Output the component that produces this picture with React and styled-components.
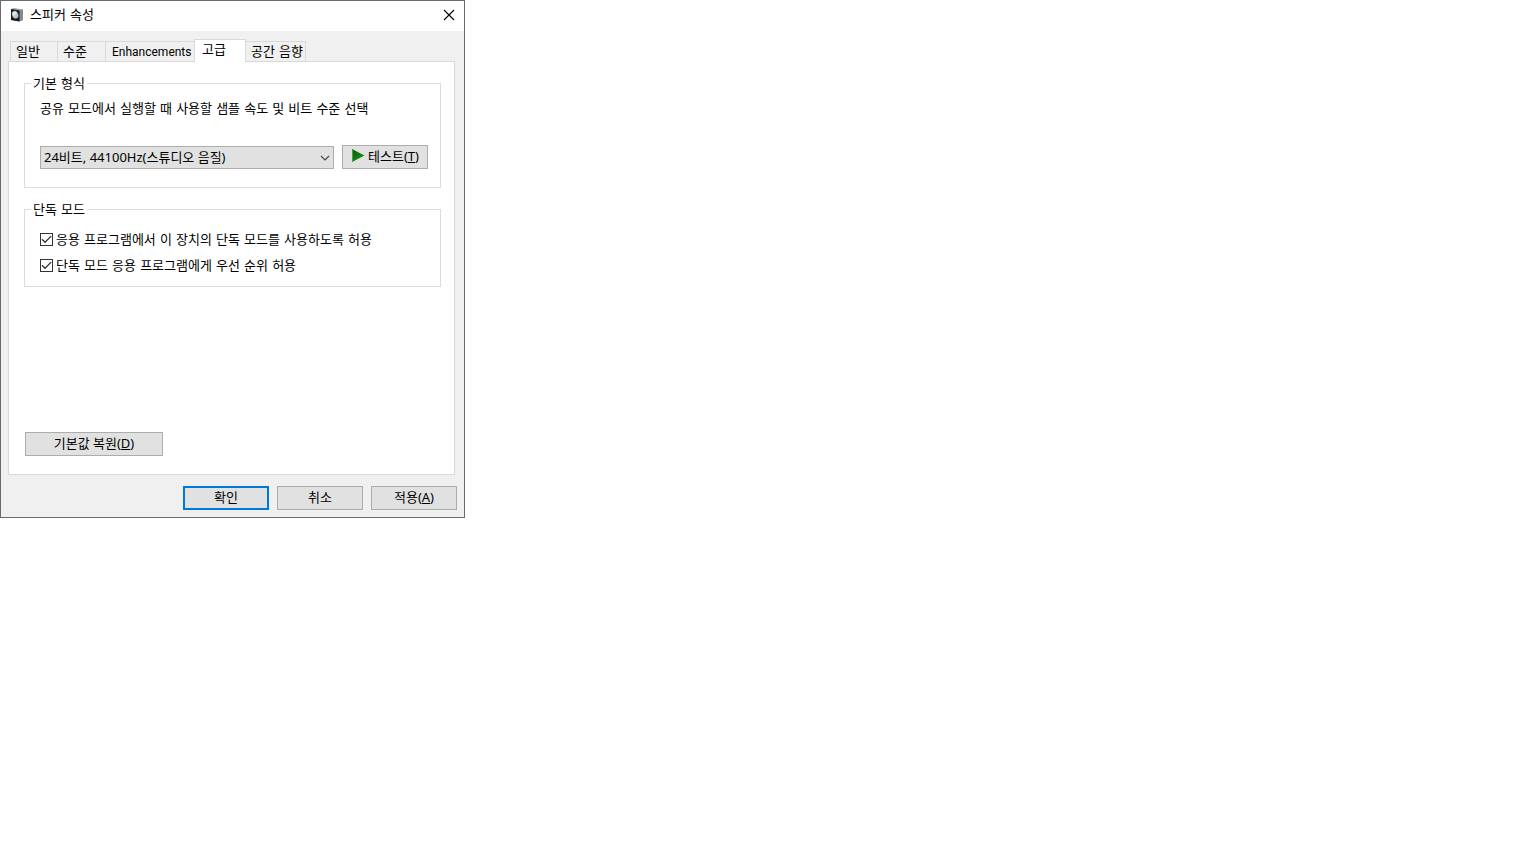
import React, { useState } from 'react';
import styled, { createGlobalStyle, css } from 'styled-components';

const proseFont = '"DejaVu Sans", "Noto Sans CJK KR", sans-serif';
const controlFont = '"Noto Sans", "Noto Sans CJK KR", sans-serif';
const latinFont = 'Roboto, "Noto Sans CJK KR", sans-serif';

const GlobalStyle = createGlobalStyle`
  * { box-sizing: border-box; }
  body { margin: 0; background: #fff; }
  body, button, select, input {
    font-family: ${proseFont};
    font-size: 13px;
    line-height: 18px;
    color: #000;
  }
`;

const Dialog = styled.main`
  display: flex;
  flex-direction: column;
  width: 100%;
  max-width: 465px;
  background: #f0f0f0;
  border: 1px solid #6b6a6e;
`;

const TitleBar = styled.header`
  display: flex;
  align-items: center;
  height: 30px;
  padding: 0 9px 2px;
  background: #fff;
`;

const Title = styled.h1`
  flex: 1;
  margin: 0 0 0 6px;
  font-size: 13px;
  font-weight: 400;
  line-height: 18px;
`;

const CloseButton = styled.button`
  display: flex;
  padding: 0;
  border: 0;
  background: none;
`;

const TabList = styled.div`
  display: flex;
  align-items: flex-end;
  height: 30px;
  padding-left: 9px;
`;

const Tab = styled.button`
  width: ${(p) => p.$width}px;
  height: 20px;
  margin: 0 -1px 0 0;
  padding: 0 0 0 5px;
  border: 1px solid #d9d9d9;
  border-bottom: 0;
  background: #f0f0f0;
  text-align: left;
  white-space: nowrap;
  ${(p) =>
    p.$latin &&
    css`
      padding-left: 6px;
      font-family: ${latinFont};
      font-size: 12px;
    `}
  ${(p) =>
    p.$active &&
    css`
      position: relative;
      height: 23px;
      margin-bottom: -1px;
      padding: 0 0 2px 7px;
      background: #fff;
    `}
`;

const Panel = styled.section`
  display: flex;
  flex-direction: column;
  gap: 11px;
  min-height: 414px;
  margin: 0 9px 0 7px;
  padding: 11px 13px 18px 15px;
  border: 1px solid #d9d9d9;
  background: #fff;
`;

const Group = styled.fieldset`
  min-width: 0;
  margin: 0;
  padding: ${(p) => (p.$compact ? '10px 12px 11px 15px' : '7px 12px 18px 15px')};
  border: 1px solid #dcdcdc;
`;

const Legend = styled.legend`
  margin-left: -9px;
  padding: 2px 2px 0;
`;

const FormatLabel = styled.label`
  display: block;
  margin-bottom: 27px;
`;

const FormatRow = styled.div`
  display: flex;
  align-items: flex-end;
  gap: 8px;
`;

const SelectBox = styled.div`
  position: relative;
  flex: 1;
  display: flex;
`;

const Select = styled.select`
  appearance: none;
  width: 100%;
  height: 23px;
  padding: 0 20px 2px 3px;
  border: 1px solid #adadad;
  border-radius: 0;
  background: #e1e1e1;
  font-family: ${controlFont};
`;

const SelectArrow = styled.svg`
  position: absolute;
  right: 4px;
  top: 9px;
  pointer-events: none;
`;

const Button = styled.button`
  display: flex;
  align-items: center;
  justify-content: center;
  gap: 3px;
  width: ${(p) => (p.$wide ? 138 : 86)}px;
  height: 24px;
  padding: 0 0 2px;
  border: ${(p) => (p.$primary ? '2px solid #0078d7' : '1px solid #adadad')};
  background: #e1e1e1;
  font-family: ${controlFont};
  white-space: nowrap;
`;

const CheckList = styled.div`
  display: flex;
  flex-direction: column;
  gap: 6px;
`;

const CheckLabel = styled.label`
  display: flex;
  align-items: center;
  gap: 3px;
`;

const CheckText = styled.span`
  padding-top: 2px;
`;

const CheckBox = styled.span`
  position: relative;
  display: flex;
  input {
    appearance: none;
    width: 13px;
    height: 13px;
    margin: 0;
    border: 1px solid #333;
    background: #fff;
  }
  svg {
    position: absolute;
    inset: 0;
    pointer-events: none;
    visibility: hidden;
  }
  input:checked + svg { visibility: visible; }
`;

const PanelActions = styled.div`
  margin-top: auto;
  padding-left: 1px;
`;

const Footer = styled.footer`
  display: flex;
  justify-content: flex-end;
  gap: 8px;
  padding: 11px 7px 7px;
`;

const SpeakerIcon = () => (
  <svg width="14" height="14" viewBox="0 0 14 14" aria-hidden="true">
    <path d="M1 1L4 0L13 1.5V12L9 13.5L1 12Z" fill="#a0a3a8" />
    <path d="M9 3L13 1.5V12L9 13.5Z" fill="#85888d" />
    <path d="M1 1L9.5 2.5V13.5L1 12Z" fill="#17191b" />
    <ellipse cx="5.2" cy="6.8" rx="3.2" ry="4" fill="#8fa0a3" transform="rotate(-20 5.2 6.8)" />
    <ellipse cx="5" cy="6.5" rx="2.5" ry="3.3" fill="#dce6e8" transform="rotate(-20 5 6.5)" />
    <path d="M4 8L7 5.5V9L5.5 10Z" fill="#b9c6c8" />
  </svg>
);

const PlayIcon = () => (
  <svg width="14" height="14" viewBox="0 0 14 14" aria-hidden="true">
    <defs>
      <linearGradient id="play" x1="0" y1="0" x2="1" y2="1">
        <stop offset="0" stopColor="#075c07" />
        <stop offset="1" stopColor="#1d981d" />
      </linearGradient>
    </defs>
    <path d="M1 0L13.5 6.5L1 13Z" fill="url(#play)" />
    <path d="M1.5 1V12.5" stroke="#4f9a4f" />
  </svg>
);

function Check({ children }) {
  return (
    <CheckLabel>
      <CheckBox>
        <input type="checkbox" defaultChecked />
        <svg width="13" height="13" viewBox="0 0 13 13" fill="none" stroke="#333" strokeWidth="1.3">
          <path d="M2 6.3L5 9.3L11.2 3.1" />
        </svg>
      </CheckBox>
      <CheckText>{children}</CheckText>
    </CheckLabel>
  );
}

const tabs = [
  { name: '일반', width: 48 },
  { name: '수준', width: 49 },
  { name: 'Enhancements', width: 90, latin: true },
  { name: '고급', width: 52 },
  { name: '공간 음향', width: 61 },
];

export default function App() {
  const [active, setActive] = useState('고급');
  return (
    <>
      <GlobalStyle />
      <Dialog>
        <TitleBar>
          <SpeakerIcon />
          <Title>스피커 속성</Title>
          <CloseButton type="button" aria-label="닫기">
            <svg width="12" height="12" viewBox="0 0 12 12" fill="none" stroke="#000" strokeWidth="1.1">
              <path d="M1 1L11 11M11 1L1 11" />
            </svg>
          </CloseButton>
        </TitleBar>
        <TabList role="tablist">
          {tabs.map((t) => (
            <Tab
              key={t.name}
              type="button"
              role="tab"
              aria-selected={t.name === active}
              $active={t.name === active}
              $width={t.width}
              $latin={t.latin}
              onClick={() => setActive(t.name)}
            >
              {t.name}
            </Tab>
          ))}
        </TabList>
        <Panel role="tabpanel">
          <Group>
            <Legend>기본 형식</Legend>
            <FormatLabel htmlFor="format">
              공유 모드에서 실행할 때 사용할 샘플 속도 및 비트 수준 선택
            </FormatLabel>
            <FormatRow>
              <SelectBox>
                <Select id="format">
                  <option>24비트, 44100Hz(스튜디오 음질)</option>
                </Select>
                <SelectArrow width="10" height="6" viewBox="0 0 10 6" fill="none" stroke="#444" strokeWidth="1.1">
                  <path d="M1 1L5 5L9 1" />
                </SelectArrow>
              </SelectBox>
              <Button type="button">
                <PlayIcon />
                <span>테스트(<u>T</u>)</span>
              </Button>
            </FormatRow>
          </Group>
          <Group $compact>
            <Legend>단독 모드</Legend>
            <CheckList>
              <Check>응용 프로그램에서 이 장치의 단독 모드를 사용하도록 허용</Check>
              <Check>단독 모드 응용 프로그램에게 우선 순위 허용</Check>
            </CheckList>
          </Group>
          <PanelActions>
            <Button type="button" $wide>
              <span>기본값 복원(<u>D</u>)</span>
            </Button>
          </PanelActions>
        </Panel>
        <Footer>
          <Button type="button" $primary>확인</Button>
          <Button type="button">취소</Button>
          <Button type="button">
            <span>적용(<u>A</u>)</span>
          </Button>
        </Footer>
      </Dialog>
    </>
  );
}
